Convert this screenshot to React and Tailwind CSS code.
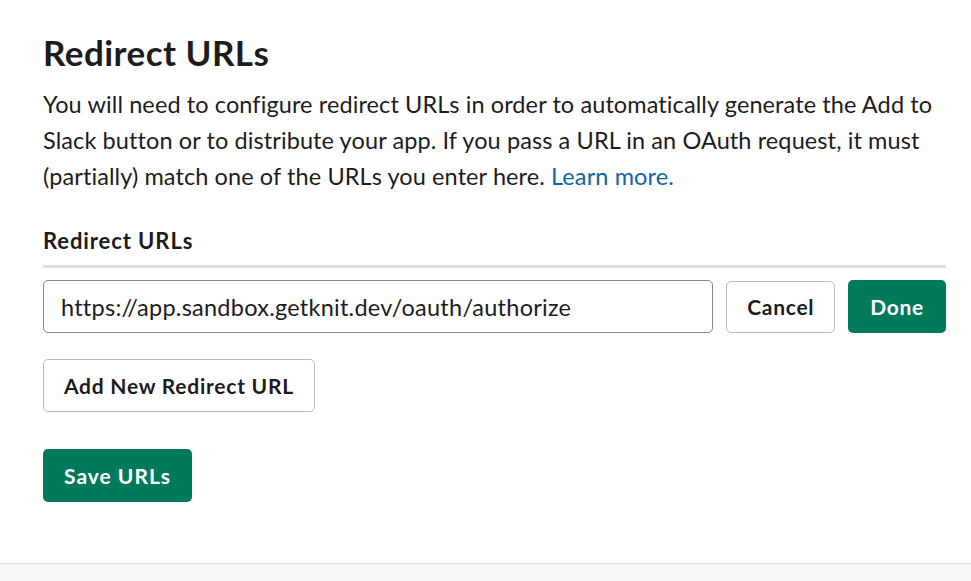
import React from 'react';

const font = { fontFamily: 'Lato, "Noto Sans", sans-serif' };

export default function App() {
  const [url, setUrl] = React.useState('https://app.sandbox.getknit.dev/oauth/authorize');

  return (
    <div className="min-h-screen bg-[#f8f8f8] text-[#1d1c1d]" style={font}>
      <div className="bg-white border-b border-[#dddddd] pl-[43px] pr-[25px] pt-[31px] pb-[61px]">
        <h2 className="text-[35px] leading-[1.2] font-bold tracking-[0.45px]">Redirect URLs</h2>
        <p className="mt-[13px] text-[23.5px] leading-[36px] tracking-[0.1px]">
          You will need to configure redirect URLs in order to automatically generate the Add to Slack button or to
          distribute your app. If you pass a URL in an OAuth request, it must (partially) match one of the URLs you
          enter here. <a href="#" className="text-[#1264a3]">Learn more.</a>
        </p>

        <div className="mt-[33px] text-[22px] leading-[28px] font-bold tracking-[0.9px] pb-[10px] border-b-[3px] border-[#dddddd]">
          Redirect URLs
        </div>

        <div className="mt-[12px] flex items-center gap-[13px]">
          <input
            value={url}
            onChange={(e) => setUrl(e.target.value)}
            className="flex-1 min-w-0 h-[53px] rounded-[5px] border border-[#868686] px-[17px] text-[23.5px] tracking-[0.25px] text-[#1d1c1d] outline-none"
            style={font}
          />
          <button className="h-[52px] px-[20px] rounded-[5px] border border-[#bbbbbb] bg-white text-[21px] tracking-[0.7px] font-bold">
            Cancel
          </button>
          <button className="h-[53px] px-[22px] rounded-[5px] bg-[#007a5a] text-white text-[21px] tracking-[0.7px] font-bold">
            Done
          </button>
        </div>

        <button className="mt-[26px] h-[53px] px-[20px] rounded-[5px] border border-[#bbbbbb] bg-white text-[21px] tracking-[0.75px] font-bold">
          Add New Redirect URL
        </button>

        <div className="mt-[37px]">
          <button className="h-[53px] px-[21px] rounded-[5px] bg-[#007a5a] text-white text-[21px] tracking-[1px] font-bold">
            Save URLs
          </button>
        </div>
      </div>
    </div>
  );
}
